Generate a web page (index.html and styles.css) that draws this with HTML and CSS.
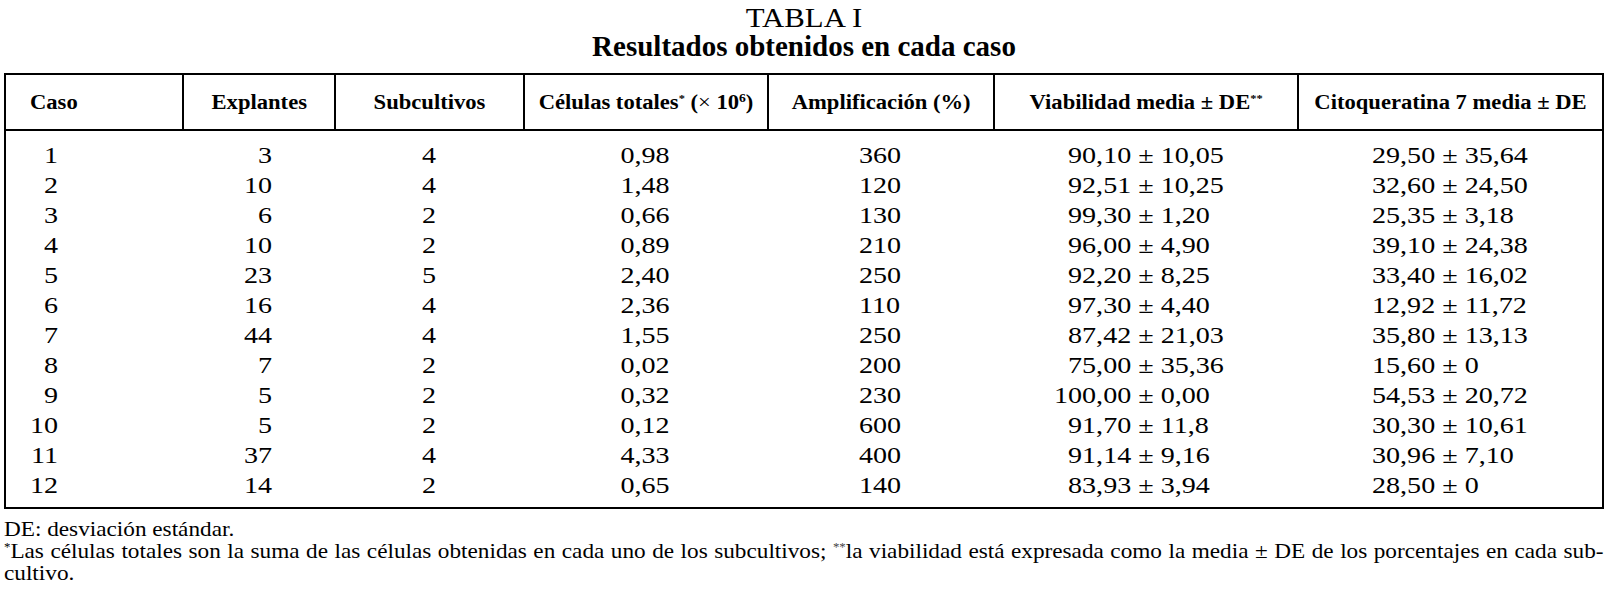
FILE: index.html
```html
<!DOCTYPE html>
<html lang="es">
<head>
<meta charset="utf-8">
<title>TABLA I</title>
<link rel="stylesheet" href="styles.css">
</head>
<body>
<div class="page">
  <div class="caption">
    <div class="cap-num"><span class="cap-num-text">TABLA I</span></div>
    <div class="cap-title">Resultados obtenidos en cada caso</div>
  </div>

  <div class="tbl">
    <div class="thead">
      <div class="th th-caso"><span class="hl">Caso</span></div>
      <div class="th"><span class="hl">Explantes</span></div>
      <div class="th"><span class="hl">Subcultivos</span></div>
      <div class="th"><span class="hl">Células totales<span class="ast">*</span>&nbsp;(<span class="times">×</span>&nbsp;10<span class="sup">6</span>)</span></div>
      <div class="th"><span class="hl">Amplificación (%)</span></div>
      <div class="th"><span class="hl">Viabilidad media ± DE<span class="ast">**</span></span></div>
      <div class="th"><span class="hl">Citoqueratina 7 media ± DE</span></div>
    </div>
    <div class="tbody">
      <div class="td c1"><span class="v w2">1</span></div><div class="td c2"><span class="v w2">3</span></div><div class="td c3"><span class="v">4</span></div><div class="td c4"><span class="v">0,98</span></div><div class="td c5"><span class="v">360</span></div><div class="td c6"><span class="v"><span class="int">90</span>,10 ± 10,05</span></div><div class="td c7"><span class="v">29,50 ± 35,64</span></div>
      <div class="td c1"><span class="v w2">2</span></div><div class="td c2"><span class="v w2">10</span></div><div class="td c3"><span class="v">4</span></div><div class="td c4"><span class="v">1,48</span></div><div class="td c5"><span class="v">120</span></div><div class="td c6"><span class="v"><span class="int">92</span>,51 ± 10,25</span></div><div class="td c7"><span class="v">32,60 ± 24,50</span></div>
      <div class="td c1"><span class="v w2">3</span></div><div class="td c2"><span class="v w2">6</span></div><div class="td c3"><span class="v">2</span></div><div class="td c4"><span class="v">0,66</span></div><div class="td c5"><span class="v">130</span></div><div class="td c6"><span class="v"><span class="int">99</span>,30 ± 1,20</span></div><div class="td c7"><span class="v">25,35 ± 3,18</span></div>
      <div class="td c1"><span class="v w2">4</span></div><div class="td c2"><span class="v w2">10</span></div><div class="td c3"><span class="v">2</span></div><div class="td c4"><span class="v">0,89</span></div><div class="td c5"><span class="v">210</span></div><div class="td c6"><span class="v"><span class="int">96</span>,00 ± 4,90</span></div><div class="td c7"><span class="v">39,10 ± 24,38</span></div>
      <div class="td c1"><span class="v w2">5</span></div><div class="td c2"><span class="v w2">23</span></div><div class="td c3"><span class="v">5</span></div><div class="td c4"><span class="v">2,40</span></div><div class="td c5"><span class="v">250</span></div><div class="td c6"><span class="v"><span class="int">92</span>,20 ± 8,25</span></div><div class="td c7"><span class="v">33,40 ± 16,02</span></div>
      <div class="td c1"><span class="v w2">6</span></div><div class="td c2"><span class="v w2">16</span></div><div class="td c3"><span class="v">4</span></div><div class="td c4"><span class="v">2,36</span></div><div class="td c5"><span class="v">110</span></div><div class="td c6"><span class="v"><span class="int">97</span>,30 ± 4,40</span></div><div class="td c7"><span class="v">12,92 ± 11,72</span></div>
      <div class="td c1"><span class="v w2">7</span></div><div class="td c2"><span class="v w2">44</span></div><div class="td c3"><span class="v">4</span></div><div class="td c4"><span class="v">1,55</span></div><div class="td c5"><span class="v">250</span></div><div class="td c6"><span class="v"><span class="int">87</span>,42 ± 21,03</span></div><div class="td c7"><span class="v">35,80 ± 13,13</span></div>
      <div class="td c1"><span class="v w2">8</span></div><div class="td c2"><span class="v w2">7</span></div><div class="td c3"><span class="v">2</span></div><div class="td c4"><span class="v">0,02</span></div><div class="td c5"><span class="v">200</span></div><div class="td c6"><span class="v"><span class="int">75</span>,00 ± 35,36</span></div><div class="td c7"><span class="v">15,60 ± 0</span></div>
      <div class="td c1"><span class="v w2">9</span></div><div class="td c2"><span class="v w2">5</span></div><div class="td c3"><span class="v">2</span></div><div class="td c4"><span class="v">0,32</span></div><div class="td c5"><span class="v">230</span></div><div class="td c6"><span class="v"><span class="int">100</span>,00 ± 0,00</span></div><div class="td c7"><span class="v">54,53 ± 20,72</span></div>
      <div class="td c1"><span class="v w2">10</span></div><div class="td c2"><span class="v w2">5</span></div><div class="td c3"><span class="v">2</span></div><div class="td c4"><span class="v">0,12</span></div><div class="td c5"><span class="v">600</span></div><div class="td c6"><span class="v"><span class="int">91</span>,70 ± 11,8</span></div><div class="td c7"><span class="v">30,30 ± 10,61</span></div>
      <div class="td c1"><span class="v w2">11</span></div><div class="td c2"><span class="v w2">37</span></div><div class="td c3"><span class="v">4</span></div><div class="td c4"><span class="v">4,33</span></div><div class="td c5"><span class="v">400</span></div><div class="td c6"><span class="v"><span class="int">91</span>,14 ± 9,16</span></div><div class="td c7"><span class="v">30,96 ± 7,10</span></div>
      <div class="td c1"><span class="v w2">12</span></div><div class="td c2"><span class="v w2">14</span></div><div class="td c3"><span class="v">2</span></div><div class="td c4"><span class="v">0,65</span></div><div class="td c5"><span class="v">140</span></div><div class="td c6"><span class="v"><span class="int">83</span>,93 ± 3,94</span></div><div class="td c7"><span class="v">28,50 ± 0</span></div>
    </div>
  </div>

  <div class="notes">
    <div class="notes-inner">
      <p class="fn">DE: desviación estándar.</p>
      <p class="fn fn-just"><span class="ast">*</span>Las células totales son la suma de las células obtenidas en cada uno de los subcultivos; <span class="ast light">**</span>la viabilidad está expresada como la media ± DE de los porcentajes en cada sub-</p>
      <p class="fn">cultivo.</p>
    </div>
  </div>
</div>
</body>
</html>
```

FILE: styles.css
```css
html, body {
  margin: 0;
  padding: 0;
  background: #ffffff;
}

body {
  font-family: "Liberation Serif", "Times New Roman", serif;
  color: #000000;
  width: 1610px;
  height: 597px;
  overflow: hidden;
}

.page {
  padding: 4px 6px 0 4px;
}

/* caption */
.caption {
  width: 1600px;
  text-align: center;
}

.cap-num {
  font-size: 28px;
  line-height: 28px;
  font-weight: normal;
}

.cap-num-text {
  display: inline-block;
  transform: scaleX(1.1);
  transform-origin: center;
}

.cap-title {
  font-size: 29px;
  line-height: 28px;
  font-weight: bold;
}

/* table */
.tbl {
  margin-top: 13px;
  width: 1596px;
  border: 2px solid #000;
}

.thead,
.tbody {
  display: grid;
  grid-template-columns: 176px 152px 189px 244px 226px 304px 305px;
}

.thead {
  border-bottom: 2px solid #000;
}

.th {
  height: 54px;
  display: flex;
  align-items: center;
  justify-content: center;
  font-size: 20px;
  font-weight: bold;
  white-space: nowrap;
}

.th + .th {
  border-left: 2px solid #000;
}

.hl {
  display: inline-block;
  transform: scaleX(1.13);
  transform-origin: center;
}

.th-caso {
  justify-content: flex-start;
  padding-left: 24px;
}

.th-caso .hl {
  transform-origin: left;
}

.times {
  font-weight: normal;
}

.ast {
  font-size: 0.55em;
  vertical-align: 0.62em;
  line-height: 0;
}

.sup {
  font-size: 0.6em;
  vertical-align: 0.6em;
  line-height: 0;
}

.light {
  color: #444;
}

.tbody {
  padding: 9px 0 7px 0;
}

.td {
  height: 30px;
  font-size: 24px;
  line-height: 30px;
  white-space: nowrap;
  text-align: center;
}

.v {
  display: inline-block;
  transform: scaleX(1.17);
  transform-origin: center;
}

.w2 {
  width: 24px;
  text-align: right;
}

.int {
  display: inline-block;
  width: 36px;
  text-align: right;
}

.c1 {
  text-align: left;
  padding-left: 24px;
}

.c1 .v {
  transform-origin: left;
}

.c6 {
  text-align: left;
  padding-left: 61px;
}

.c7 {
  text-align: left;
  padding-left: 75px;
}

.c6 .v,
.c7 .v {
  transform-origin: left;
}

/* notes */
.notes {
  margin-top: 9px;
  width: 1600px;
}

.notes-inner {
  width: 1481px;
  transform: scaleX(1.08);
  transform-origin: left top;
}

.fn {
  margin: 0;
  font-size: 21.5px;
  line-height: 22px;
  white-space: nowrap;
}

.fn-just {
  white-space: normal;
  word-spacing: -2px;
  text-align: justify;
  text-align-last: justify;
}
```
